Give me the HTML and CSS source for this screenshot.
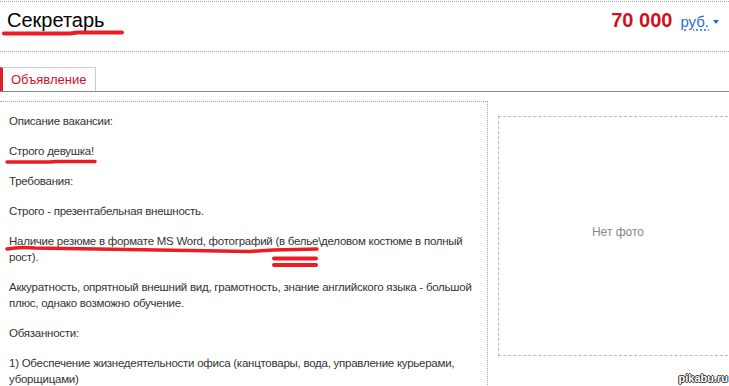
FILE: index.html
```html
<!DOCTYPE html>
<html lang="ru">
<head>
    <meta charset="UTF-8">
    <meta name="viewport" content="width=device-width, initial-scale=1.0">
    <title>Секретарь</title>
    <link rel="stylesheet" href="styles.css">
</head>
<body>

<div class="page">
    <!-- Header -->
    <div class="vacancy-header">
        <h1 class="vacancy-title">Секретарь</h1>
        <div class="vacancy-price">
            <span class="price-amount">70 000</span>
            <span class="price-currency">руб.</span>
            <span class="price-caret"></span>
        </div>
    </div>

    <!-- Tabs -->
    <div class="tabs">
        <a class="tab tab-active">Объявление</a>
    </div>

    <!-- Content -->
    <div class="vacancy-body">
        <div class="vacancy-text">
            <p>Описание вакансии:</p>
            <p>Строго девушка!</p>
            <p>Требования:</p>
            <p>Строго - презентабельная внешность.</p>
            <p>Наличие резюме в формате MS Word, фотографий (в белье\деловом костюме в полный рост).</p>
            <p>Аккуратность, опрятноый внешний вид, грамотность, знание английского языка - большой плюс, однако возможно обучение.</p>
            <p>Обязанности:</p>
            <p>1) Обеспечение жизнедеятельности офиса (канцтовары, вода, управление курьерами, уборщицами)</p>
        </div>
        <div class="vacancy-side">
            <div class="photo-box">Нет фото</div>
        </div>
    </div>

    <!-- Red marker strokes drawn over the page -->
    <svg class="marks" width="729" height="386" viewBox="0 0 729 386">
        <path d="M4 33.5 L70 33.5 L78 32.5 L122 32.5" stroke-width="4"/>
        <path d="M7 162 L50 162 L56 161.5 L95 161.5" stroke-width="3.5"/>
        <path d="M7 249 Q20 246.5 35 248 L250 251.5 L273 250 L317 249" stroke-width="3.5"/>
        <path d="M274 258.5 L316 258.5" stroke-width="4"/>
        <path d="M274 265 L316 265" stroke-width="4"/>
    </svg>

    <div class="watermark">pikabu.ru</div>
</div>

</body>
</html>
```

FILE: styles.css
```css
/* General Styles */
body {
    margin: 0;
    font-family: 'Liberation Sans', Arial, sans-serif;
    background-color: #fff;
    color: #333;
    overflow: hidden;
}

.page {
    position: relative;
    width: 729px;
    height: 386px;
    overflow: hidden;
    padding-top: 1px;
    box-sizing: border-box;
}

/* Header */
.vacancy-header {
    display: flex;
    justify-content: space-between;
    align-items: baseline;
    border-top: 1px dotted #aaa;
    border-bottom: 1px dotted #aaa;
    padding: 6px 10px 0 7px;
    height: 43px;
}

.vacancy-title {
    margin: 0;
    font-size: 20px;
    font-weight: normal;
    line-height: 24px;
    color: #000;
}

.vacancy-price {
    display: flex;
    align-items: baseline;
}

.price-amount {
    font-size: 20px;
    font-weight: bold;
    color: #d0121f;
}

.price-currency {
    margin-left: 8px;
    font-size: 15px;
    color: #2a6fcf;
    text-decoration: underline dotted;
    text-underline-offset: 3px;
}

.price-caret {
    margin-left: 4px;
    width: 0;
    height: 0;
    border-left: 3px solid transparent;
    border-right: 3px solid transparent;
    border-top: 4px solid #1a6fd0;
    align-self: center;
    position: relative;
    top: 1px;
}

/* Tabs */
.tabs {
    display: flex;
    padding-top: 15px;
    border-bottom: 1px solid #888;
}

.tab {
    padding: 0 9px 0 8px;
    height: 23px;
    line-height: 23px;
    font-size: 13px;
    color: #d0122b;
    border-left: 3px solid #e21c2a;
    border-top: 1px solid #ccc;
    border-right: 1px solid #ccc;
}

/* Content */
.vacancy-body {
    display: flex;
    margin-top: 9px;
}

.vacancy-text {
    width: 488px;
    flex-shrink: 0;
    box-sizing: border-box;
    padding: 11px 8px 0 9px;
    border-top: 1px dotted #aaa;
    border-right: 1px dotted #aaa;
    height: 300px;
    font-size: 11.5px;
    letter-spacing: -0.25px;
    line-height: 16px;
}

.vacancy-text p {
    margin: 0 0 14px;
}

.vacancy-side {
    flex-shrink: 0;
    padding: 15px 0 0 10px;
}

.photo-box {
    width: 240px;
    height: 240px;
    box-sizing: border-box;
    border: 1px dashed #bbb;
    padding-bottom: 8px;
    display: flex;
    align-items: center;
    justify-content: center;
    font-size: 12px;
    color: #888;
}

/* Marker strokes */
.marks {
    position: absolute;
    top: 0;
    left: 0;
    pointer-events: none;
}

.marks path {
    fill: none;
    stroke: #ed1c24;
    stroke-linecap: round;
    stroke-linejoin: round;
}

/* Watermark */
.watermark {
    position: absolute;
    right: 1px;
    bottom: 2px;
    font-size: 11px;
    font-weight: bold;
    color: #fff;
    text-shadow: 1px 0 0 #333, -1px 0 0 #333, 0 1px 0 #333, 0 -1px 0 #333;
}
```
